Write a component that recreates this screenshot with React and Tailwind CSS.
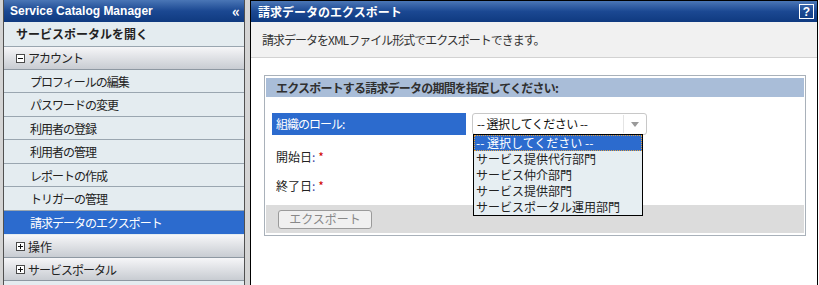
const jp = { fontFamily: '"Noto Sans CJK JP", "Noto Sans", sans-serif' }

function Box({ plus }) {
  return (
    <svg width="9" height="9" viewBox="0 0 9 9" className="shrink-0">
      <rect x="0.5" y="0.5" width="8" height="8" fill="#fff" stroke="#4a4a4a" />
      <line x1="2" y1="4.5" x2="7" y2="4.5" stroke="#111" />
      {plus && <line x1="4.5" y1="2" x2="4.5" y2="7" stroke="#111" />}
    </svg>
  )
}

const items = [
  ['プロフィールの編集', 'h-[23px]'],
  ['パスワードの変更', 'h-[24px]'],
  ['利用者の登録', 'h-[23px]'],
  ['利用者の管理', 'h-[24px]'],
  ['レポートの作成', 'h-[23px]'],
  ['トリガーの管理', 'h-[24px]'],
]

const roles = [
  '-- 選択してください --',
  'サービス提供代行部門',
  'サービス仲介部門',
  'サービス提供部門',
  'サービスポータル運用部門',
]

function Sidebar() {
  return (
    <div className="ml-[3px] w-[242px] h-full border-x border-[#505050] bg-[#e4ecf0] flex flex-col text-[12px] text-[#222]" style={jp}>
      <div className="h-[22px] shrink-0 flex items-center justify-between pl-[6px] pr-[4px] bg-linear-to-b from-[#4a76b6] via-[#1b4892] to-[#0f3a80] text-white">
        <span className="font-bold text-[12px]" style={{ fontFamily: '"Liberation Sans", Arial, sans-serif' }}>Service Catalog Manager</span>
        <span className="font-bold text-[15px] leading-none -mt-[2px]">«</span>
      </div>
      <div className="h-[25px] shrink-0 flex items-center pl-[12px] font-bold border-b border-[#9aa6b0]">サービスポータルを開く</div>
      <div className="h-[23px] shrink-0 flex items-center gap-[3px] pl-[12px] bg-linear-to-b from-[#f6f6f8] to-[#c8ccd2] border-b border-[#8e98a2]">
        <Box />
        <span className="tracking-[-1px]">アカウント</span>
      </div>
      {items.map(([t, h]) => (
        <div key={t} className={`${h} shrink-0 flex items-center pl-[26px] pt-[1px] border-b border-[#9aa6b0] tracking-[-1px]`}>{t}</div>
      ))}
      <div className="h-[24px] shrink-0 flex items-center pl-[26px] pt-[1px] bg-[#2c6bce] text-white border-b border-[#e4ecf0] tracking-[-1px]">請求データのエクスポート</div>
      <div className="h-[23px] shrink-0 flex items-center gap-[3px] pl-[12px] pt-[1px] bg-linear-to-b from-[#f6f6f8] to-[#c8ccd2] border-b border-[#8e98a2]">
        <Box plus />
        <span>操作</span>
      </div>
      <div className="h-[23px] shrink-0 flex items-center gap-[3px] pl-[12px] pt-[1px] bg-linear-to-b from-[#f6f6f8] to-[#c8ccd2] border-b border-[#8e98a2]">
        <Box plus />
        <span className="tracking-[-1px]">サービスポータル</span>
      </div>
    </div>
  )
}

function Main() {
  return (
    <div className="ml-[5px] w-[568px] h-full border-x border-t border-black bg-white flex flex-col text-[12px] text-[#333]" style={jp}>
      <div className="h-[21px] shrink-0 flex items-center justify-between pl-[7px] pr-[3px] bg-linear-to-b from-[#4a76b6] via-[#1b4892] to-[#0f3a80]">
        <span className="font-bold text-white">請求データのエクスポート</span>
        <span className="w-[15px] h-[15px] border border-white flex items-center justify-center text-white font-bold text-[12px] leading-none" style={{ fontFamily: '"Liberation Sans", Arial, sans-serif' }}>?</span>
      </div>
      <div className="h-[36px] shrink-0 flex items-center pl-[11px] bg-[#f1f1f1] border-b border-[#d2d2d2] tracking-[-1px]">請求データをXMLファイル形式でエクスポートできます。</div>
      <div className="ml-[13px] mt-[17px] w-[542px] border border-[#a9b1ba] pt-[2px] pb-[2px] px-[1px]">
        <div className="h-[19px] flex items-center pl-[10px] bg-[#a9bdd8] font-bold text-[#303030] tracking-[-0.8px]">エクスポートする請求データの期間を指定してください:</div>
        <div className="h-[108px] flex flex-col">
          <div className="mt-[16px] h-[22px] flex gap-[6px] pl-[6px]">
            <div className="w-[194px] h-full bg-[#2c6bce] text-white flex items-center pl-[4px] tracking-[-1px]">組織のロール:</div>
            <div className="relative w-[175px] h-full">
              <div className="w-full h-full bg-white border border-[#c8c8c8] rounded-[3px] flex items-center pl-[4px] text-[#111]">
                <span className="flex-1 tracking-[-0.5px]">-- 選択してください --</span>
                <div className="w-px h-[18px] bg-[#e4e4e4]" />
                <div className="w-[22px] flex justify-center">
                  <svg width="8" height="5" viewBox="0 0 8 5"><polygon points="0,0 8,0 4,5" fill="#9a9a9a" /></svg>
                </div>
              </div>
              <div className="absolute left-[1px] top-[21px] w-[170px] h-[82px] border border-black bg-[#e6eef2] z-10 text-[#222]">
                {roles.map((r, i) => (
                  <div key={r} className={`h-[16px] flex items-center pl-[2px] ${i === 0 ? 'bg-[#2c6bce] text-white outline-1 outline-dotted outline-[#e0a040] -outline-offset-1' : ''}`}>{r}</div>
                ))}
              </div>
            </div>
          </div>
          <div className="mt-[7px] h-[30px] flex items-center pl-[10px] text-[#222]">
            開始日<span className="text-[#4040a0]">:</span><span className="text-[#d00000] ml-[3px]">*</span>
          </div>
          <div className="h-[28px] flex items-center pl-[10px] text-[#222]">
            終了日<span className="text-[#4040a0]">:</span><span className="text-[#d00000] ml-[3px]">*</span>
          </div>
        </div>
        <div className="h-[28px] bg-[#dcdcdc] flex items-center pl-[12px]">
          <div className="w-[94px] h-[19px] border border-[#9a9a9a] rounded-[3px] bg-[#f0f0f0] flex items-center justify-center text-[#888]">エクスポート</div>
        </div>
      </div>
    </div>
  )
}

export default function App() {
  return (
    <div className="w-[819px] h-[285px] flex bg-[#d4d4d4] overflow-hidden">
      <Sidebar />
      <Main />
      <div className="flex-1 bg-white" />
    </div>
  )
}
